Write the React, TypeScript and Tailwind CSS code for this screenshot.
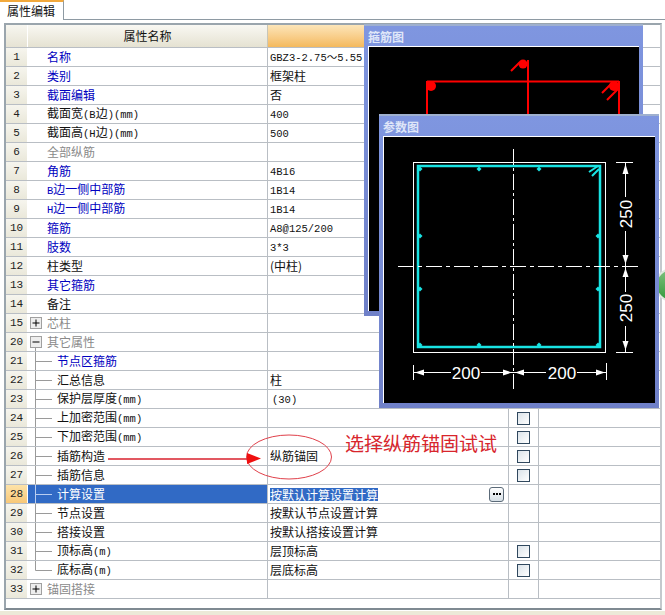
import React from "react";

type Row = {
  n: number;
  label: React.ReactNode;
  color?: "blue" | "black" | "gray";
  tree?: "plus" | "minus" | "mid" | "last";
  value?: React.ReactNode;
  check?: boolean;
  selected?: boolean;
};

const L = ({ children }: { children: React.ReactNode }) => (
  <span className="font-['Liberation_Mono','Noto_Sans_CJK_SC',monospace] text-[10.5px]">{children}</span>
);

const rows: Row[] = [
  { n: 1, label: "名称", color: "blue", value: <L>GBZ3-2.75～5.55</L> },
  { n: 2, label: "类别", color: "blue", value: "框架柱" },
  { n: 3, label: "截面编辑", color: "blue", value: "否" },
  { n: 4, label: <>截面宽<L>(B</L>边<L>)(mm)</L></>, value: <L>400</L> },
  { n: 5, label: <>截面高<L>(H</L>边<L>)(mm)</L></>, value: <L>500</L> },
  { n: 6, label: "全部纵筋", color: "gray" },
  { n: 7, label: "角筋", color: "blue", value: <L>4B16</L> },
  { n: 8, label: <><L>B</L>边一侧中部筋</>, color: "blue", value: <L>1B14</L> },
  { n: 9, label: <><L>H</L>边一侧中部筋</>, color: "blue", value: <L>1B14</L> },
  { n: 10, label: "箍筋", color: "blue", value: <L>A8@125/200</L> },
  { n: 11, label: "肢数", color: "blue", value: <L>3*3</L> },
  { n: 12, label: "柱类型", value: "(中柱)" },
  { n: 13, label: "其它箍筋", color: "blue" },
  { n: 14, label: "备注" },
  { n: 15, label: "芯柱", color: "gray", tree: "plus" },
  { n: 20, label: "其它属性", color: "gray", tree: "minus" },
  { n: 21, label: "节点区箍筋", color: "blue", tree: "mid" },
  { n: 22, label: "汇总信息", tree: "mid", value: "柱" },
  { n: 23, label: <>保护层厚度<L>(mm)</L></>, tree: "mid", value: <span className="ml-[2px]"><L>(30)</L></span> },
  { n: 24, label: <>上加密范围<L>(mm)</L></>, tree: "mid", check: true },
  { n: 25, label: <>下加密范围<L>(mm)</L></>, tree: "mid", check: true },
  { n: 26, label: "插筋构造", tree: "mid", value: "纵筋锚固", check: true },
  { n: 27, label: "插筋信息", tree: "mid", check: true },
  { n: 28, label: "计算设置", tree: "mid", value: "按默认计算设置计算", selected: true },
  { n: 29, label: "节点设置", tree: "mid", value: "按默认节点设置计算" },
  { n: 30, label: "搭接设置", tree: "mid", value: "按默认搭接设置计算" },
  { n: 31, label: <>顶标高<L>(m)</L></>, tree: "mid", value: "层顶标高", check: true },
  { n: 32, label: <>底标高<L>(m)</L></>, tree: "last", value: "层底标高", check: true },
  { n: 33, label: "锚固搭接", color: "gray", tree: "plus" },
];

const colorClass = { blue: "text-[#0000c0]", black: "text-[#111]", gray: "text-[#8a8a8a]" };

function TreeMark({ tree, selected }: { tree: Row["tree"]; selected?: boolean }) {
  const line = selected ? "#b9cdf0" : "#9a9a9a";
  if (tree === "plus" || tree === "minus") {
    return (
      <svg width="19" height="18" viewBox="0 0 19 18" className="shrink-0">
        <rect x="2.5" y="3.5" width="11" height="11" fill="#eeeeee" stroke="#a0a0a0" />
        <path d="M4.5 9H11.5" stroke="#000" />
        {tree === "plus" && <path d="M8 5.5V12.5" stroke="#000" />}
        {tree === "minus" && <path d="M7.5 14.5V18" stroke={line} />}
      </svg>
    );
  }
  return (
    <svg width="29" height="18" viewBox="0 0 29 18" className="shrink-0">
      <path d={tree === "last" ? "M7.5 -1V9.5H24" : "M7.5 -1V19M7.5 9.5H24"} stroke={line} fill="none" />
    </svg>
  );
}

function TableRow({ r }: { r: Row }) {
  return (
    <div className="flex h-[19px] border-b border-[#b9bec4]">
      <div className={`w-[21px] shrink-0 mr-px flex items-center justify-center text-[#222] font-['Liberation_Mono',monospace] text-[11px] ${r.selected ? "bg-gradient-to-b from-[#fde3a8] to-[#f8c878]" : "bg-gradient-to-b from-[#f6f5ee] to-[#eae8da]"}`}>
        {r.n}
      </div>
      <div className={`w-[240px] shrink-0 flex items-center border-r border-[#b9bec4] text-[12px] ${r.selected ? "bg-[#316ac5] text-white" : colorClass[r.color ?? "black"]} ${r.tree ? "pl-0" : "pl-[19px]"}`}>
        {r.tree && <TreeMark tree={r.tree} selected={r.selected} />}
        <span className="whitespace-pre">{r.label}</span>
      </div>
      <div className="w-[241px] shrink-0 flex items-center justify-between border-r border-[#b9bec4] pl-[2px] pr-[2px] text-[12px] text-[#111]">
        {r.selected ? <span className="bg-[#316ac5] text-white leading-[13px]">{r.value}</span> : <span className="whitespace-pre">{r.value}</span>}
        {r.selected && (
          <span className="w-[15px] h-[15px] mr-[2px] rounded-[3px] border border-[#5b6a78] bg-gradient-to-b from-white to-[#d6dfe6] flex items-center justify-center gap-px">
            <i className="w-[2px] h-[2px] bg-black" />
            <i className="w-[2px] h-[2px] bg-black" />
            <i className="w-[2px] h-[2px] bg-black" />
          </span>
        )}
      </div>
      <div className="w-[30px] shrink-0 flex items-center justify-center border-r border-[#b9bec4]">
        {r.check && <span className="w-[13px] h-[13px] border border-[#30485e] bg-gradient-to-br from-[#dbe3e9] to-white" />}
      </div>
    </div>
  );
}

function Panel({ title, className, children }: { title: string; className: string; children: React.ReactNode }) {
  return (
    <div className={`absolute flex flex-col bg-gradient-to-b from-[#7f96e0] to-[#6f80c8] border-t-2 border-[#9fb0cf] px-[4px] pb-[5px] ${className}`}>
      <div className="h-[20px] shrink-0 flex items-center text-[12px] font-bold text-[#dfe6f8] pt-[2px]">{title}</div>
      <div className="flex-1 border border-white border-b-0 border-r-0 bg-black overflow-hidden">{children}</div>
    </div>
  );
}

function Arrow({ d }: { d: string }) {
  return <path d={d} fill="#fff" />;
}

export default function App() {
  return (
    <div className="relative w-[665px] h-[615px] overflow-hidden bg-white font-['Noto_Sans_CJK_SC','Liberation_Sans',sans-serif]">
      {/* tab strip */}
      <div className="flex h-[20px] border-b border-[#8e9aa3]">
        <div className="w-[64px] h-[20px] bg-white border-r border-[#8e9aa3] border-t-2 border-t-[#f2a93c] pl-[7px] text-[12px] leading-[17px] text-[#111]">属性编辑</div>
      </div>
      {/* frame */}
      <div className="ml-[4px] mr-[3px] mt-[3px] h-[587px] border-2 border-[#9aa5ad] border-b-[#7f8a92] border-r-[#c4c9cd]">
        {/* header */}
        <div className="flex h-[23px] border-b border-[#b9bec4]">
          <div className="w-[21px] mr-px shrink-0 bg-gradient-to-b from-[#f7f6f0] to-[#e6e3d4]" />
          <div className="w-[240px] shrink-0 flex items-center justify-center text-[12px] text-[#111] border-r border-[#c8c6b8] bg-gradient-to-b from-[#f9f8f3] to-[#e5e2d2]">属性名称</div>
          <div className="w-[241px] shrink-0 bg-gradient-to-b from-[#fce5b8] to-[#f4b95c]" />
        </div>
        {rows.map((r) => (
          <TableRow key={r.n} r={r} />
        ))}
      </div>
      <div className="absolute left-0 right-0 bottom-0 h-[4px] bg-[#ece9d8]" />

      {/* green knob peeking behind panels */}
      <div className="absolute left-[655px] top-[268px] w-[34px] h-[34px] rounded-full bg-gradient-to-b from-[#7cc07c] to-[#2f9a3c] border-2 border-[#dfe8df]" />

      {/* stirrup panel */}
      <Panel title="箍筋图" className="left-[364px] top-[24px] w-[279px] h-[292px]">
        <svg width="272" height="268" viewBox="368 47 272 268">
          <path d="M426 81.5H618M426 81V200M618 81V200M527 60V200" stroke="#ff0000" strokeWidth="2" fill="none" />
          <circle cx="430" cy="86" r="5" fill="#ff0000" />
          <circle cx="613" cy="86" r="5" fill="#ff0000" />
          <circle cx="522" cy="64" r="4.5" fill="#ff0000" />
          <path d="M510 71L519 62M601 93L611 83M606 100L617 89" stroke="#ff0000" strokeWidth="2" fill="none" />
        </svg>
      </Panel>

      {/* parameter panel */}
      <Panel title="参数图" className="left-[379px] top-[114px] w-[280px] h-[294px]">
        <svg width="271" height="266" viewBox="384 138 271 266" fontFamily="'Liberation Sans',sans-serif">
          <rect x="413.5" y="163.5" width="192" height="190" fill="none" stroke="#fff" />
          <rect x="418" y="167" width="182" height="181" fill="none" stroke="#19e3e3" strokeWidth="2.5" />
          <path d="M589 173L598 167M592 177L599 170" stroke="#19e3e3" strokeWidth="2" />
          {[
            [479, 170], [539, 170], [420, 237], [420, 290], [598, 237], [598, 290],
            [420, 346], [479, 346], [539, 346], [598, 346], [420, 170],
          ].map(([x, y], i) => (
            <path key={i} d={`M${x - 2.5} ${y}L${x} ${y - 2.5}L${x + 2.5} ${y}L${x} ${y + 2.5}Z`} fill="#19e3e3" />
          ))}
          <path d="M513.5 150V390" stroke="#fff" strokeDasharray="16 3 3 3" />
          <path d="M398 267.5H639" stroke="#fff" strokeDasharray="16 4 4 4" />
          {/* vertical dimension */}
          <path d="M616 163.5H633M625.5 163V198M625.5 232V293M625.5 327V353M616 353.5H633" stroke="#fff" />
          <Arrow d="M625.5 165L622.5 175H628.5Z" />
          <Arrow d="M625.5 265L622.5 256H628.5Z" />
          <Arrow d="M625.5 269L622.5 278H628.5Z" />
          <Arrow d="M625.5 351L622.5 342H628.5Z" />
          <text x="0" y="0" transform="translate(632 215) rotate(-90)" textAnchor="middle" fontSize="17" fill="#fff">250</text>
          <text x="0" y="0" transform="translate(632 309) rotate(-90)" textAnchor="middle" fontSize="17" fill="#fff">250</text>
          {/* horizontal dimension */}
          <path d="M413.5 366V381M606.5 364V381M414 373.5H451M481 373.5H546M577 373.5H606" stroke="#fff" />
          <Arrow d="M415 373.5L424 370.5V376.5Z" />
          <Arrow d="M512 373.5L503 370.5V376.5Z" />
          <Arrow d="M515 373.5L524 370.5V376.5Z" />
          <Arrow d="M605 373.5L596 370.5V376.5Z" />
          <text x="466" y="380" textAnchor="middle" fontSize="17" fill="#fff">200</text>
          <text x="562" y="380" textAnchor="middle" fontSize="17" fill="#fff">200</text>
        </svg>
      </Panel>

      {/* annotation */}
      <svg className="absolute left-0 top-0 pointer-events-none" width="665" height="615">
        <ellipse cx="289" cy="457" rx="42.5" ry="22" fill="none" stroke="#e0404a" strokeWidth="1" />
        <path d="M108 459H250" stroke="#d8202c" strokeWidth="1.5" />
        <path d="M247 453L261 458.5L247 464Z" fill="#f01010" />
      </svg>
      <div className="absolute left-[345px] top-[431px] text-[19px] leading-[24px] text-[#d8252c] whitespace-nowrap">选择纵筋锚固试试</div>
    </div>
  );
}
